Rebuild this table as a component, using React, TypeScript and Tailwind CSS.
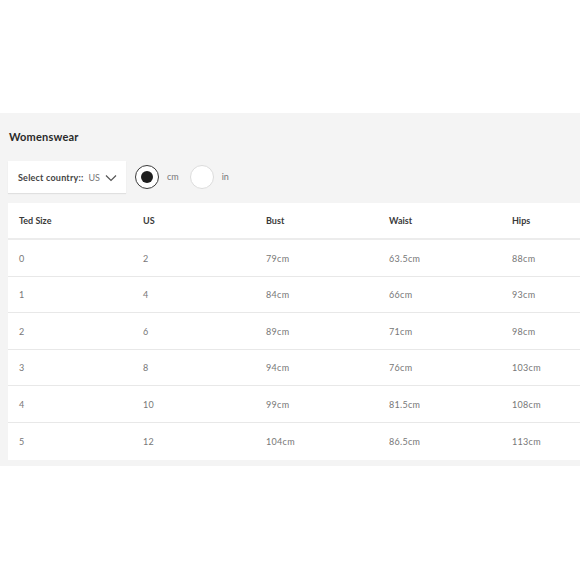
import React from "react";

const rows = [
  ["0", "2", "79cm", "63.5cm", "88cm"],
  ["1", "4", "84cm", "66cm", "93cm"],
  ["2", "6", "89cm", "71cm", "98cm"],
  ["3", "8", "94cm", "76cm", "103cm"],
  ["4", "10", "99cm", "81.5cm", "108cm"],
  ["5", "12", "104cm", "86.5cm", "113cm"],
];

const headers = ["Ted Size", "US", "Bust", "Waist", "Hips"];

function Radio({ checked, label }: { checked?: boolean; label: string }) {
  return (
    <div className="flex items-center">
      <span
        className={
          checked
            ? "flex h-[24px] w-[24px] items-center justify-center rounded-full border-[1.5px] border-[#3a3a3a] bg-white"
            : "flex h-[24px] w-[24px] items-center justify-center rounded-full border border-[#dcdcdc] bg-white"
        }
      >
        {checked && <span className="h-[12px] w-[12px] rounded-full bg-[#1e1e1e]" />}
      </span>
      <span className="ml-[8px] text-[9px] text-[#777]">{label}</span>
    </div>
  );
}

export default function App() {
  return (
    <div className="h-[580px] w-[580px] bg-white" style={{ fontFamily: "Lato, 'Noto Sans', sans-serif" }}>
      <div className="h-[113px]" />
      <div className="h-[353px] bg-[#f4f4f4] pl-[8px] pt-[16px]">
        <h2 className="pl-[1px] text-[11px] font-bold leading-[16px] tracking-[0.2px] text-[#2a2a2a]">Womenswear</h2>

        <div className="mt-[16px] flex h-[32px] items-center">
          <div className="flex h-[32px] w-[118px] items-center bg-white pl-[10px] pt-[1px] shadow-[0_1px_1px_rgba(0,0,0,0.08)]">
            <span className="text-[9px] font-bold tracking-[0.2px] text-[#444]">Select country::</span>
            <span className="ml-[5px] text-[9px] text-[#777]">US</span>
            <svg width="12" height="8" viewBox="0 0 12 8" className="ml-[5px]" fill="none" stroke="#555" strokeWidth="1.2">
              <path d="M1 1.5 L6 6.5 L11 1.5" />
            </svg>
          </div>
          <div className="ml-[9px] flex items-center gap-[11px]">
            <Radio checked label="cm" />
            <Radio label="in" />
          </div>
        </div>

        <div className="mt-[10px] bg-white">
          <div className="grid h-[37px] grid-cols-[124px_123px_123px_123px_1fr] items-center border-b-2 border-[#ececec] pl-[11px] pt-[1px]">
            {headers.map((h) => (
              <span key={h} className="text-[9px] font-bold text-[#3a3a3a]">
                {h}
              </span>
            ))}
          </div>
          {rows.map((r, i) => (
            <div
              key={i}
              className={
                i < rows.length - 1
                  ? "grid h-[36.6px] grid-cols-[124px_123px_123px_123px_1fr] items-center border-b border-[#e8e8e8] pl-[11px] pt-[1px]"
                  : "grid h-[36.6px] grid-cols-[124px_123px_123px_123px_1fr] items-center pl-[11px] pt-[1px]"
              }
            >
              {r.map((c, j) => (
                <span key={j} className="text-[9px] tracking-[0.3px] text-[#777]">
                  {c}
                </span>
              ))}
            </div>
          ))}
        </div>
      </div>
    </div>
  );
}
